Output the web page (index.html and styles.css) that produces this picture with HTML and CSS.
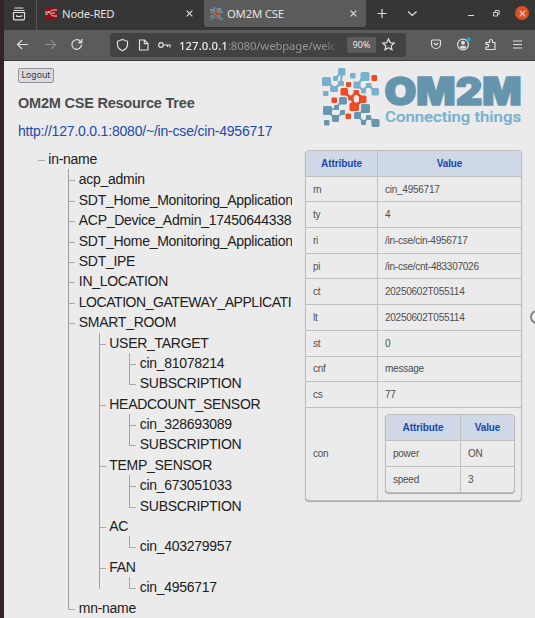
FILE: index.html
```html
<!DOCTYPE html>
<html lang="en">
<head>
<meta charset="utf-8">
<title>OM2M CSE</title>
<link rel="stylesheet" href="styles.css">
</head>
<body>
<div class="window">
  <div class="tabs">
    <div class="view"><svg width="14" height="14" viewBox="0 0 14 14"><path d="M2.500 1h9M1.500 3.500h11M1.500 5.500h11v6a1.300 1.300 0 0 1-1.300 1.300H2.800a1.300 1.300 0 0 1-1.300-1.300zM4.800 8v1.500h4.400V8"/></svg></div>
    <div class="tab first">
      <svg class="nodered" width="12" height="11" viewBox="0 0 12 11"><rect width="12" height="11" rx="1"/><path d="M0 4h3c3 0 2 4 6 4h3M3 4c3 0 2-2 6-2h3M0 6h3M6 5h4"/></svg>
      <span class="label">Node-RED</span>
      <svg class="x" width="7" height="7" viewBox="0 0 7 7"><path d="M.7.700l5.600 5.600M6.300.7L.7 6.300"/></svg>
    </div>
    <div class="tab active">
      <svg class="mark" width="13" height="13" viewBox="0 0 60 60"><use href="#dots"/></svg>
      <span class="label">OM2M CSE</span>
      <svg class="x" width="7" height="7" viewBox="0 0 7 7"><path d="M.7.700l5.600 5.600M6.300.7L.7 6.300"/></svg>
    </div>
    <svg class="controls" width="169" height="30" viewBox="0 0 169 30">
      <path d="M11.500 13.500h9M16 9v9M42 11.500l4.300 4 4.300-4M102 15.500h6"/>
      <path class="thin" d="M127.500 12.500h4v3.500h-4zM129.200 12.200v-1.700h4v3.700h-1.500"/>
    </svg>
  </div>
  <div class="nav">
    <svg class="arrows" width="80" height="31" viewBox="0 0 80 31">
      <path d="M24 14.500H14M18 10l-4.500 4.500L18 19"/>
      <path class="dim" d="M41 14.500h10M47 10l4.500 4.500L47 19"/>
      <path d="M77.500 14.500a4.800 4.800 0 1 1-1.500-3.500l1.500 1.500M77.800 9v3.700h-3.700"/>
    </svg>
    <div class="address">
      <svg width="64" height="24" viewBox="0 0 64 24">
        <path d="M12.500 6.500l5 1.800v3.500c0 3-2 4.700-5 6-3-1.300-5-3-5-6V8.300zM29.500 7h5l3.500 3.500V17h-8.500zM34.300 7v3.700H38"/>
        <circle cx="51" cy="12" r="2.300"/><path d="M53.300 12H60v2.500M57.500 12v2"/>
      </svg>
      <span class="url"><b>127.0.0.1</b>:8080/webpage/welc</span>
      <span class="zoom">90%</span>
      <svg width="23" height="24" viewBox="0 0 23 24"><path d="M12.500 6l1.700 3.600 4 .5-3 2.700.8 4-3.500-2-3.500 2 .8-4-3-2.700 4-.5z"/></svg>
    </div>
    <svg class="actions" width="125" height="31" viewBox="0 0 125 31">
      <path d="M25.500 11a1 1 0 0 1 1-1h7a1 1 0 0 1 1 1v3a4.500 4.500 0 0 1-9 0zM27.800 13l2.200 2 2.200-2"/>
      <circle cx="57" cy="14.500" r="5.400"/><circle class="fill" cx="57" cy="12.800" r="2"/><path class="fill" d="M53.500 17.500c1-2.500 6-2.500 7 0q-3.500 2.500-7 0"/><circle class="dot" cx="62.500" cy="9.500" r="2.200"/>
      <path d="M80 12.500h3.500V11a1.500 1.500 0 0 1 3 0v1.500H89v7h-9V17h1.500a1.300 1.300 0 0 0 0-2.600H80z"/>
      <path d="M107 11h9M107 14.500h9M107 18h9"/>
    </svg>
  </div>
  <main class="page">
    <section class="left">
      <button class="logout">Logout</button>
      <h1>OM2M CSE Resource Tree</h1>
      <div class="resource">http://127.0.0.1:8080/~/in-cse/cin-4956717</div>
      <ul class="tree root">
        <li><span>in-name</span>
          <ul>
            <li><span>acp_admin</span></li>
            <li><span>SDT_Home_Monitoring_Application</span></li>
            <li><span>ACP_Device_Admin_17450644338</span></li>
            <li><span>SDT_Home_Monitoring_Application</span></li>
            <li><span>SDT_IPE</span></li>
            <li><span>IN_LOCATION</span></li>
            <li><span class="tight">LOCATION_GATEWAY_APPLICATI</span></li>
            <li><span>SMART_ROOM</span>
              <ul>
                <li><span>USER_TARGET</span><ul><li><span>cin_81078214</span></li><li><span>SUBSCRIPTION</span></li></ul></li>
                <li><span>HEADCOUNT_SENSOR</span><ul><li><span>cin_328693089</span></li><li><span>SUBSCRIPTION</span></li></ul></li>
                <li><span>TEMP_SENSOR</span><ul><li><span>cin_673051033</span></li><li><span>SUBSCRIPTION</span></li></ul></li>
                <li><span>AC</span><ul><li><span>cin_403279957</span></li></ul></li>
                <li class="open"><span>FAN</span><ul><li><span>cin_4956717</span></li></ul></li>
              </ul>
            </li>
            <li><span>mn-name</span></li>
          </ul>
        </li>
      </ul>
    </section>
    <section class="right">
      <svg class="logo" width="204" height="64" viewBox="0 0 204 64">
        <defs><g id="dots">
          <path class="links" d="M6 14l8 8 6-7 1-10M14 11l4-3M35 19l7-8M37 19l5 4 6-5 6 7M21 34l-6 7-8 3 7 8 7-6M45 41l-9 8 7 6 5-5 7 6"/>
          <path class="hot" d="M23 25l7 6 5-6 7 7-8 8-3-8"/>
          <g class="light"><rect x="1" y="10" width="9" height="9" rx="1.500"/><rect x="17" y="1" width="7.500" height="7.500" rx="1.500"/><rect x="12" y="9" width="5" height="5" rx="1"/><rect x="17" y="14" width="6" height="5" rx="1"/><rect x="9" y="19" width="8" height="6" rx="1.500"/><rect x="29" y="6" width="5.500" height="5.500" rx="1"/><rect x="39.500" y="5" width="9" height="9" rx="1.500"/><rect x="32.500" y="14.500" width="7" height="7" rx="1"/><rect x="45" y="16" width="5.500" height="5" rx="1"/><rect x="40" y="21.500" width="5" height="5" rx="1"/><rect x="50.500" y="21" width="7.500" height="7.500" rx="1.500"/><rect x="2" y="24" width="5.500" height="5" rx="1"/></g>
          <g class="steel"><rect x="18" y="30" width="8" height="7.500" rx="1.500"/><rect x="13" y="38" width="5" height="5" rx="1"/><rect x="2" y="39" width="9" height="9" rx="1.500"/><rect x="19" y="43" width="5" height="5" rx="1"/><rect x="11" y="48" width="7" height="7" rx="1.500"/><rect x="3" y="53" width="5.500" height="5.500" rx="1"/><rect x="40" y="37" width="9" height="9" rx="1.500"/><rect x="33" y="45" width="7" height="7" rx="1.500"/><rect x="45" y="48" width="5" height="5" rx="1"/><rect x="40" y="53" width="5" height="5" rx="1"/><rect x="50.500" y="52" width="8" height="8" rx="1.500"/></g>
          <g class="red"><rect x="25" y="15" width="5" height="5" rx="1"/><rect x="50.500" y="8" width="5.500" height="6" rx="1"/><rect x="19.500" y="21" width="7.500" height="7.500" rx="1.500"/><rect x="32.500" y="23" width="5.500" height="5" rx="1"/><rect x="27" y="28.500" width="5.500" height="5" rx="1"/><rect x="38" y="28.500" width="7.500" height="7.500" rx="1.500"/><rect x="10.500" y="30.500" width="5.500" height="5.500" rx="1"/><rect x="28.500" y="35.500" width="9.500" height="8.500" rx="1.500"/><rect x="24.500" y="46.500" width="5.500" height="5.500" rx="1"/></g>
        </g></defs>
        <use href="#dots"/>
        <text class="brand" x="63.500" y="38" textLength="137" lengthAdjust="spacingAndGlyphs">OM2M</text>
        <text class="motto" x="64" y="54.500" textLength="136" lengthAdjust="spacingAndGlyphs">Connecting things</text>
      </svg>
      <table class="attrs">
        <tr><th class="key">Attribute</th><th>Value</th></tr>
        <tr><td>rn</td><td>cin_4956717</td></tr>
        <tr><td>ty</td><td>4</td></tr>
        <tr><td>ri</td><td>/in-cse/cin-4956717</td></tr>
        <tr><td>pi</td><td>/in-cse/cnt-483307026</td></tr>
        <tr><td>ct</td><td>20250602T055114</td></tr>
        <tr><td>lt</td><td>20250602T055114</td></tr>
        <tr><td>st</td><td>0</td></tr>
        <tr><td>cnf</td><td>message</td></tr>
        <tr><td>cs</td><td>77</td></tr>
        <tr class="nest"><td>con</td><td>
          <table class="attrs inner">
            <tr><th class="key">Attribute</th><th>Value</th></tr>
            <tr><td>power</td><td>ON</td></tr>
            <tr><td>speed</td><td>3</td></tr>
          </table>
        </td></tr>
      </table>
    </section>
  </main>
  <div class="close"><svg class="x" width="7" height="7" viewBox="0 0 7 7"><path d="M.7.700l5.600 5.600M6.300.7L.7 6.300"/></svg></div>
  <div class="handle"></div>
</div>
</body>
</html>
```

FILE: styles.css
```css
* { box-sizing: border-box; }
body { margin: 0; background: #35202c; overflow: hidden; }
.window { position: relative; width: 531px; height: 618px; margin-left: 4px; background: #ebebeb; overflow: hidden; font-family: "Liberation Sans", sans-serif; }
svg { display: block; flex: none; fill: none; stroke: #dedede; stroke-width: 1.2; }
.tabs { display: flex; height: 30px; background: #363636; font: 11.3px "Noto Sans", sans-serif; color: #e2e2e2; }
.view { width: 33px; border-right: 1px solid #555; padding: 7px 0 0 8px; }
.tab { display: flex; align-items: center; height: 27px; }
.label { flex: 1; white-space: nowrap; }
.first { width: 167px; padding: 0 11px 0 8px; gap: 5px; }
.first .label { letter-spacing: -.2px; }
.active { width: 162px; padding: 0 9px 0 6px; gap: 4px; background: #5b5b5b; border-radius: 0 0 3px 3px; }
.active .label { letter-spacing: -.2px; }
.nodered { stroke: #eee; stroke-width: .9; }
.nodered rect { fill: #8f1014; stroke: none; }
.nav { display: flex; height: 31px; background: #5b5b5b; border-bottom: 1px solid #3c3c3c; }
.arrows { margin-right: 26px; }
.dim { stroke: #8b8b8b; }
.address { display: flex; align-items: center; width: 296px; height: 24px; margin-top: 3px; background: #424242; border-radius: 3px; font: 11.3px "Noto Sans", sans-serif; color: #969696; }
.url { width: 170px; padding-left: 5px; overflow: hidden; white-space: nowrap; letter-spacing: -.1px; -webkit-mask-image: linear-gradient(90deg, #000 148px, transparent 168px); mask-image: linear-gradient(90deg, #000 148px, transparent 168px); }
.url b { font-weight: 500; color: #ededed; letter-spacing: .1px; }
.zoom { width: 29px; margin-left: 3px; height: 16px; border-radius: 2px; background: #5c5c5c; color: #e8e8e8; font-size: 8.8px; line-height: 16px; text-align: center; }
.fill { fill: #dedede; stroke: none; }
.dot { fill: #15a7d8; stroke: none; }
.close { position: absolute; left: 511px; top: 6px; width: 14px; height: 14px; border-radius: 50%; background: #dd4f23; display: grid; place-items: center; }
.thin { stroke-width: .9; }
.page { display: flex; height: 557px; }
.left { flex: none; width: 288px; padding: 7px 0 0 14px; overflow: hidden; }
.logout { display: block; width: 36px; height: 15px; padding: 0; border: 1px solid #929299; border-radius: 2px; background: #dadadf; color: #333; font: 8.7px/13px "Noto Sans", sans-serif; }
h1 { margin: 12px 0 0; font-size: 14.5px; letter-spacing: -.22px; line-height: 16px; color: #4c4c4c; white-space: nowrap; }
.resource { margin-top: 12px; font-size: 14px; letter-spacing: -.2px; line-height: 16px; color: #2347ad; white-space: nowrap; }
ul { list-style: none; margin: 0; padding: 0; }
.root { margin: 10px 0 0 20px; font-size: 14px; letter-spacing: -.28px; line-height: 20.4px; color: #202020; white-space: nowrap; }
li { position: relative; padding-left: 10.3px; }
li span { display: block; height: 20.4px; }
li .tight { letter-spacing: -.45px; }
li ul { padding-left: 20.2px; }
li::before { content: ""; position: absolute; left: 0; top: 11px; width: 7px; height: 1px; background: #a9a9a9; }
li li::after { content: ""; position: absolute; left: 0; top: 0; bottom: 0; width: 1px; background: #a2a2a2; }
li li:last-child::after { bottom: auto; height: 11px; }
li.open:last-child::after { height: 32px; }
.right { flex: none; width: 220px; margin-left: 13px; }
.logo { margin: 6px 0 0 16px; height: 64px; }
.logo, .mark { stroke: none; }
.links { stroke: #79a8c0; stroke-width: 2; }
.hot { stroke: #e94a27; stroke-width: 2.500; }
.light { fill: #78b0cd; }
.steel { fill: #6797ae; }
.red { fill: #ed4a25; }
.brand { font: 900 38px Inter, sans-serif; fill: #6495ad; stroke: #6495ad; stroke-width: 1.6; }
.motto { font: 500 14px Roboto, sans-serif; fill: #77b1cf; stroke: #77b1cf; stroke-width: .2; }
.attrs { width: 217px; margin-top: 19px; border: 1px solid #bcbcbc; border-radius: 4px; border-spacing: 0; table-layout: fixed; overflow: hidden; box-shadow: 0 1px 1px #aaa; color: #4e4e4e; font-size: 10px; letter-spacing: -.25px; background: #ebebeb; }
.attrs th, .attrs td { height: 25.7px; padding: 0 7px; border-bottom: 1px solid #c0c0c0; text-align: left; }
.attrs th + th, .attrs td + td { border-left: 1px solid #c0c0c0; }
.attrs th { background: #ced8e7; color: #2046ad; text-align: center; letter-spacing: -.1px; }
.attrs .key { width: 71px; }
.attrs tr:last-child > td { border-bottom: 0; }
.attrs .nest > td { height: 92px; }
.attrs .inner { width: 130px; margin: 0; }
.attrs .inner .key { width: 74px; }
.handle { position: absolute; left: 526px; top: 310px; width: 14px; height: 14px; border: 2px solid #858585; border-radius: 50%; background: #f4f4f4; }
```
